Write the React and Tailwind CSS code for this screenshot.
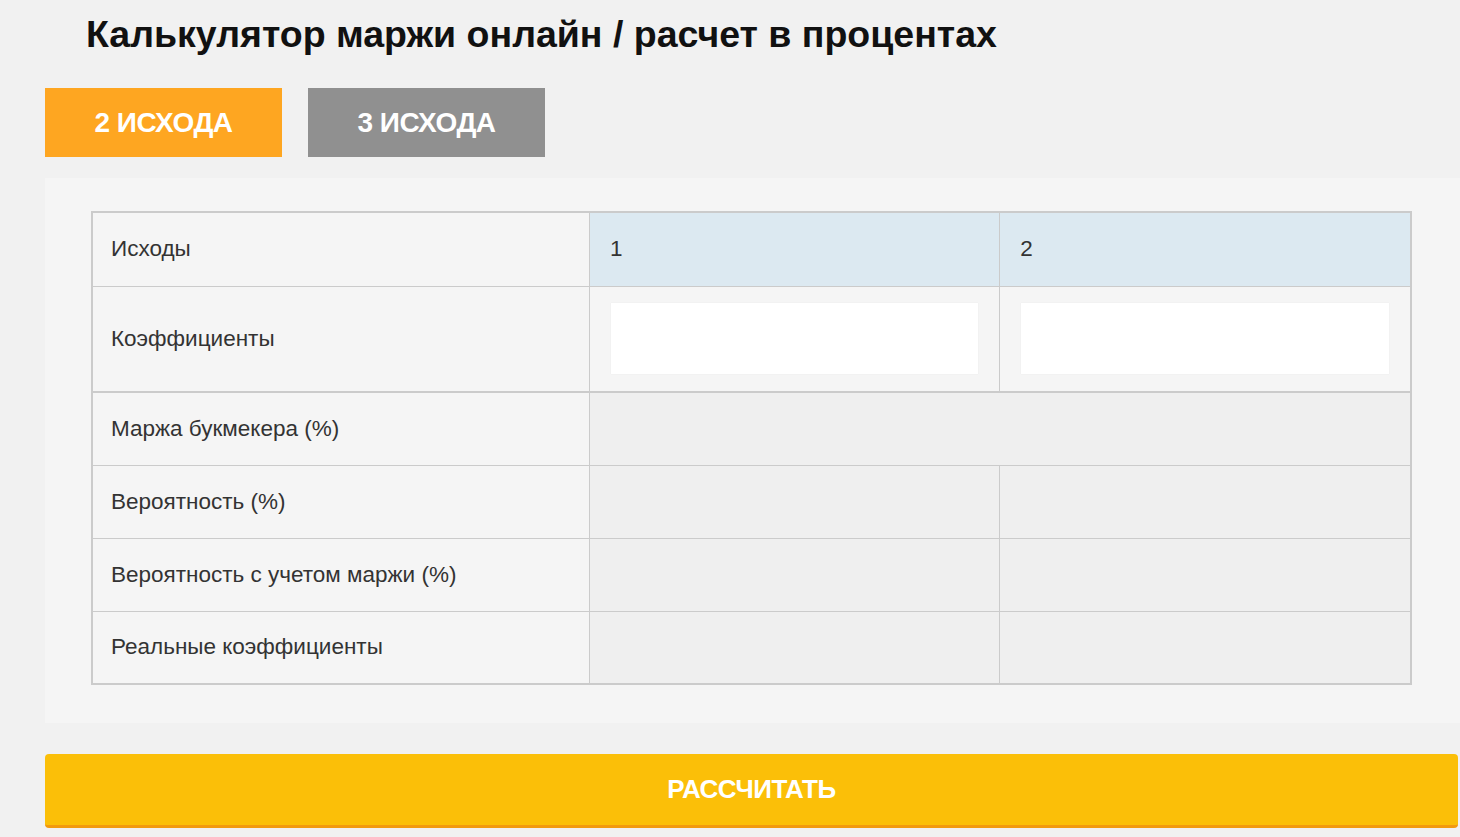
const ROWS = [
  { label: "Маржа букмекера (%)", merged: true },
  { label: "Вероятность (%)" },
  { label: "Вероятность с учетом маржи (%)" },
  { label: "Реальные коэффициенты" },
];

export default function App() {
  return (
    <div className="min-h-[837px] bg-[#f1f1f1] font-['Liberation_Sans',Arial,sans-serif] text-[#333]">
      <h1 className="pl-[86px] pt-[12px] text-[37.5px] leading-[44px] font-bold text-[#111]">
        Калькулятор маржи онлайн / расчет в процентах
      </h1>

      <div className="flex gap-[26px] pl-[45px] pt-[32px]">
        <button className="h-[69px] w-[237px] bg-[#fea621] text-[28px] font-bold tracking-[-0.5px] text-white">
          2 ИСХОДА
        </button>
        <button className="h-[69px] w-[237px] bg-[#909090] text-[28px] font-bold tracking-[-0.5px] text-white">
          3 ИСХОДА
        </button>
      </div>

      <div className="ml-[45px] mt-[21px] bg-[#f5f5f5] pl-[46px] pr-[48px] pt-[33px] pb-[38px]">
        <table className="w-full border-collapse border-2 border-[#cbcbcb] text-[22.5px]">
          <colgroup>
            <col className="w-[498px]" />
            <col className="w-[411px]" />
            <col className="w-[412px]" />
          </colgroup>
          <tbody>
            <tr className="h-[74px]">
              <td className="border border-[#cbcbcb] bg-[#f5f5f5] pl-[18px]">Исходы</td>
              <td className="border border-[#cbcbcb] bg-[#dce9f1] pl-[20px]">1</td>
              <td className="border border-[#cbcbcb] bg-[#dce9f1] pl-[20px]">2</td>
            </tr>
            <tr className="h-[106px] border-b-2 border-[#cbcbcb]">
              <td className="border border-[#cbcbcb] bg-[#f5f5f5] pl-[18px]">Коэффициенты</td>
              {[0, 1].map((i) => (
                <td key={i} className="border border-[#cbcbcb] bg-[#f5f5f5] px-[21px]">
                  <input className="block h-[71px] w-full bg-white shadow-[0_0_1px_#e4e4e4] outline-none" />
                </td>
              ))}
            </tr>
            {ROWS.map((r) => (
              <tr key={r.label} className="h-[73px]">
                <td className="border border-[#cbcbcb] bg-[#f5f5f5] pl-[18px]">{r.label}</td>
                {r.merged ? (
                  <td colSpan={2} className="border border-[#cbcbcb] bg-[#efefef]" />
                ) : (
                  <>
                    <td className="border border-[#cbcbcb] bg-[#efefef]" />
                    <td className="border border-[#cbcbcb] bg-[#efefef]" />
                  </>
                )}
              </tr>
            ))}
          </tbody>
        </table>
      </div>

      <div className="ml-[45px] mr-[2px] mt-[31px]">
        <button className="h-[74px] w-full rounded-[4px] border-b-[3px] border-[#f29a0e] bg-[#fbbf08] text-[26px] font-bold tracking-[-0.5px] text-white">
          РАССЧИТАТЬ
        </button>
      </div>
    </div>
  );
}
